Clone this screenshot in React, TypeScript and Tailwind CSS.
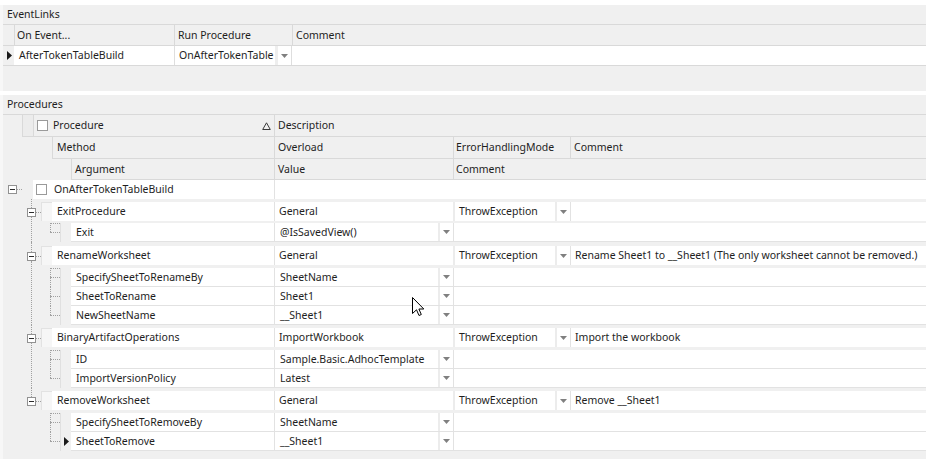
import React from 'react';

type Arg = { name: string; value: string; current?: boolean };
type Method = {
  name: string;
  overload: string;
  mode: string;
  comment: string;
  args: Arg[];
  topPad: string;
  stem: string;
  gap: string;
};

const methods: Method[] = [
  {
    name: 'ExitProcedure',
    overload: 'General',
    mode: 'ThrowException',
    comment: '',
    args: [{ name: 'Exit', value: '@IsSavedView()' }],
    topPad: 'pt-[3px]',
    stem: 'h-[9px]',
    gap: 'h-[2px]',
  },
  {
    name: 'RenameWorksheet',
    overload: 'General',
    mode: 'ThrowException',
    comment: 'Rename Sheet1 to __Sheet1 (The only worksheet cannot be removed.)',
    args: [
      { name: 'SpecifySheetToRenameBy', value: 'SheetName' },
      { name: 'SheetToRename', value: 'Sheet1' },
      { name: 'NewSheetName', value: '__Sheet1' },
    ],
    topPad: 'pt-[4px]',
    stem: 'h-[10px]',
    gap: 'h-[3px]',
  },
  {
    name: 'BinaryArtifactOperations',
    overload: 'ImportWorkbook',
    mode: 'ThrowException',
    comment: 'Import the workbook',
    args: [
      { name: 'ID', value: 'Sample.Basic.AdhocTemplate' },
      { name: 'ImportVersionPolicy', value: 'Latest' },
    ],
    topPad: 'pt-[3px]',
    stem: 'h-[9px]',
    gap: 'h-[3px]',
  },
  {
    name: 'RemoveWorksheet',
    overload: 'General',
    mode: 'ThrowException',
    comment: 'Remove __Sheet1',
    args: [
      { name: 'SpecifySheetToRemoveBy', value: 'SheetName' },
      { name: 'SheetToRemove', value: '__Sheet1', current: true },
    ],
    topPad: 'pt-[3px]',
    stem: 'h-[9px]',
    gap: 'h-[3px]',
  },
];

function Expander() {
  return (
    <div className="w-[9px] h-[9px] border border-[#919191] bg-white flex items-center justify-center shrink-0">
      <div className="w-[5px] h-px bg-[#2b2b2b]" />
    </div>
  );
}

function Check() {
  return <div className="w-[11px] h-[11px] border border-[#9a9a9a] bg-white shrink-0" />;
}

function RowArrow() {
  return (
    <svg width="5" height="9" viewBox="0 0 5 9">
      <path d="M0 0L5 4.5L0 9Z" fill="#1a1a1a" />
    </svg>
  );
}

function DropBtn() {
  return (
    <div className="w-[15px] h-full flex items-center justify-center bg-white border-l-2 border-[#ececec] shrink-0">
      <svg width="7" height="4" viewBox="0 0 7 4">
        <path d="M0 0H7L3.5 4Z" fill="#808080" />
      </svg>
    </div>
  );
}

function Tree({ first, last }: { first: boolean; last: boolean }) {
  return (
    <div className="w-[19px] flex flex-col shrink-0">
      <div
        className={`ml-[9px] h-[9px] border-l border-dotted border-[#a0a0a0] ${
          first ? 'border-t w-[10px]' : ''
        }`}
      />
      <div
        className={`ml-[9px] w-[10px] flex-1 border-t border-dotted border-[#a0a0a0] ${
          last ? '' : 'border-l'
        }`}
      />
    </div>
  );
}

function ArgRow({ arg, first, last }: { arg: Arg; first: boolean; last: boolean }) {
  return (
    <div className="flex h-[19px]">
      <Tree first={first} last={last} />
      <div className="w-[11px] shrink-0 border-l border-[#e0e0e0] flex items-center justify-center">
        {arg.current && <RowArrow />}
      </div>
      <div className="flex-1 flex bg-white border-b border-[#e2e2e2]">
        <div className="w-[203px] shrink-0 flex items-center pl-[5px]">{arg.name}</div>
        <div className="w-[179px] shrink-0 flex border-l border-[#e2e2e2]">
          <div className="flex-1 flex items-center pl-[5px]">{arg.value}</div>
          <DropBtn />
        </div>
        <div className="flex-1 border-l border-[#e2e2e2]" />
      </div>
    </div>
  );
}

function Group({ m, last }: { m: Method; last: boolean }) {
  return (
    <div className="flex">
      {/* tree gutter */}
      <div className="w-[38px] flex flex-col shrink-0">
        <div className={`ml-[28px] ${m.stem} border-l border-dotted border-[#a0a0a0]`} />
        <div className="flex items-center h-[9px] pl-[24px]">
          <Expander />
          <div className="w-[5px] border-t border-dotted border-[#a0a0a0]" />
        </div>
        <div className={`ml-[28px] flex-1 ${last ? '' : 'border-l border-dotted border-[#a0a0a0]'}`} />
      </div>

      <div className={`flex-1 flex flex-col ${m.topPad}`}>
        <div className="flex h-[19px]">
          <div className="w-[11px] shrink-0 bg-[#f6f6f6] border-l border-t border-[#e2e2e2]" />
          <div className="w-[222px] shrink-0 bg-white flex items-center pl-[5px]">{m.name}</div>
          <div className="w-[179px] shrink-0 bg-white border-l border-[#e2e2e2] flex items-center pl-[4px]">
            {m.overload}
          </div>
          <div className="w-[117px] shrink-0 bg-white border-l-2 border-[#ececec] flex">
            <div className="flex-1 flex items-center pl-[4px]">{m.mode}</div>
            <DropBtn />
          </div>
          <div className="flex-1 bg-white border-l border-[#e2e2e2] flex items-center pl-[4px] whitespace-nowrap">
            {m.comment}
          </div>
        </div>
        <div className={m.gap} />
        {m.args.map((a, i) => (
          <ArgRow key={a.name} arg={a} first={i === 0} last={i === m.args.length - 1} />
        ))}
      </div>
    </div>
  );
}

function EventLinks() {
  return (
    <section className="bg-[#f0f0f0] border-l-[3px] border-[#f7f7f7]">
      <div className="h-[20px] flex items-center pl-[4px] border-b border-[#d9d9d9]">EventLinks</div>
      <div className="h-[21px] flex border-b border-[#d9d9d9]">
        <div className="w-[11px] shrink-0" />
        <div className="w-[160px] shrink-0 flex items-center pl-[2px] border-l border-[#d9d9d9]">On Event...</div>
        <div className="w-[118px] shrink-0 flex items-center pl-[3px] border-l border-[#d9d9d9]">Run Procedure</div>
        <div className="flex-1 flex items-center pl-[3px] border-l border-[#d9d9d9]">Comment</div>
      </div>
      <div className="h-[20px] flex border-b border-[#d9d9d9]">
        <div className="w-[11px] shrink-0 flex items-center justify-center pl-[2px]">
          <RowArrow />
        </div>
        <div className="w-[160px] shrink-0 bg-white flex items-center pl-[5px]">AfterTokenTableBuild</div>
        <div className="w-[118px] shrink-0 bg-white flex border-l border-[#dedede]">
          <div className="flex-1 flex items-center pl-[4px]">OnAfterTokenTable</div>
          <div className="w-[17px] h-full flex items-center justify-center bg-white border-l-[3px] border-r border-l-[#eeeeee] border-r-[#dedede] shrink-0">
            <svg width="7" height="4" viewBox="0 0 7 4">
              <path d="M0 0H7L3.5 4Z" fill="#808080" />
            </svg>
          </div>
        </div>
        <div className="flex-1 bg-white" />
      </div>
      <div className="h-[25px]" />
    </section>
  );
}

function Procedures() {
  return (
    <section className="bg-[#f0f0f0] border-l-[3px] border-[#f7f7f7] h-[364px] flex flex-col">
      <div className="h-[20px] shrink-0 flex items-center pl-[4px] border-b border-[#d9d9d9]">Procedures</div>

      {/* header band 1 */}
      <div className="h-[22px] shrink-0 flex">
        <div className="w-[19px] shrink-0" />
        <div className="flex-1 flex border-b border-[#d9d9d9]">
          <div className="w-[11px] shrink-0 border-l border-[#d9d9d9] bg-[#ececec]" />
          <div className="w-[241px] shrink-0 flex items-center pl-[3px] pr-[3px] border-l border-[#d9d9d9]">
            <Check />
            <span className="ml-[5px] flex-1">Procedure</span>
            <svg width="9" height="8" viewBox="0 0 9 8">
              <path d="M4.5 0.8L8.3 7.5H0.7Z" fill="none" stroke="#3a3a3a" strokeWidth="1" />
            </svg>
          </div>
          <div className="flex-1 flex items-center pl-[3px] border-l border-[#d9d9d9]">Description</div>
        </div>
      </div>

      {/* header band 2 */}
      <div className="h-[22px] shrink-0 flex">
        <div className="w-[49px] shrink-0" />
        <div className="flex-1 flex border-b border-[#d9d9d9]">
          <div className="w-[222px] shrink-0 flex items-center pl-[4px] border-l border-[#d9d9d9]">Method</div>
          <div className="w-[179px] shrink-0 flex items-center pl-[3px] border-l border-[#d9d9d9]">Overload</div>
          <div className="w-[117px] shrink-0 flex items-center pl-[2px] border-l border-[#d9d9d9]">ErrorHandlingMode</div>
          <div className="flex-1 flex items-center pl-[3px] border-l border-[#d9d9d9]">Comment</div>
        </div>
      </div>

      {/* header band 3 */}
      <div className="h-[21px] shrink-0 flex">
        <div className="w-[68px] shrink-0" />
        <div className="flex-1 flex border-b border-[#d9d9d9]">
          <div className="w-[203px] shrink-0 flex items-center pl-[3px] border-l border-[#d9d9d9]">Argument</div>
          <div className="w-[179px] shrink-0 flex items-center pl-[3px] border-l border-[#d9d9d9]">Value</div>
          <div className="flex-1 flex items-center pl-[2px] border-l border-[#d9d9d9]">Comment</div>
        </div>
      </div>

      {/* root row */}
      <div className="h-[19px] shrink-0 flex">
        <div className="w-[19px] shrink-0 flex items-center pl-[5px]">
          <Expander />
          <div className="w-[5px] border-t border-dotted border-[#a0a0a0]" />
        </div>
        <div className="w-[11px] shrink-0" />
        <div className="w-[241px] shrink-0 bg-white flex items-center pl-[3px]">
          <Check />
          <span className="ml-[7px]">OnAfterTokenTableBuild</span>
        </div>
        <div className="flex-1 bg-white border-l border-[#e2e2e2]" />
      </div>

      {methods.map((m, i) => (
        <Group key={m.name} m={m} last={i === methods.length - 1} />
      ))}
    </section>
  );
}

function Cursor() {
  return (
    <svg
      className="absolute left-[412px] top-[297px]"
      width="13"
      height="20"
      viewBox="0 0 13 20"
    >
      <path
        d="M0.5 0.5V16.5L4.5 12.8L7 18.5L9.3 17.5L6.9 12H11.8Z"
        fill="#ffffff"
        stroke="#000000"
        strokeWidth="1"
        strokeLinejoin="miter"
      />
    </svg>
  );
}

export default function App() {
  return (
    <div className="relative w-[926px] h-[459px] overflow-hidden bg-white font-['Noto_Sans',sans-serif] text-[10.5px] leading-none text-[#1e1e1e]">
      <div className="h-[5px]" />
      <EventLinks />
      <div className="h-[4px]" />
      <Procedures />
      <Cursor />
    </div>
  );
}
